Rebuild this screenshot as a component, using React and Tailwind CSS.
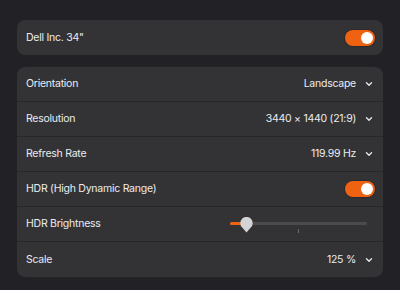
import React from 'react';

const Chevron = () => (
  <svg width="8" height="8" viewBox="0 0 8 8" className="ml-[9px] text-gray-200">
    <path d="M1.5 2.8 L4 5.2 L6.5 2.8" fill="none" stroke="currentColor" strokeWidth="1.4" strokeLinecap="round" strokeLinejoin="round" />
  </svg>
);

const Toggle = () => (
  <div className="w-[30px] h-[16px] rounded-full bg-[#ef6211] ring-1 ring-[#2a2a2d] flex items-center justify-end pr-[2px]">
    <div className="w-[12px] h-[12px] rounded-full bg-white" />
  </div>
);

const Row = ({ label, children }) => (
  <div className="h-[35px] flex items-center justify-between pl-[9px] pr-[8px]">
    <span>{label}</span>
    {children}
  </div>
);

const Select = ({ value }) => (
  <div className="flex items-center pr-[2px]">
    <span>{value}</span>
    <Chevron />
  </div>
);

// brightness slider with pin-shaped thumb
const Slider = () => (
  <div className="relative w-[137px] h-[20px] mr-[8px]">
    <div className="absolute left-0 right-0 top-[8px] h-[3px] rounded-full bg-[#4b4b4f]" />
    <div className="absolute left-0 w-[12px] top-[8px] h-[3px] rounded-l-full bg-[#ef6211]" />
    <div className="absolute left-[68px] top-[15px] w-[1px] h-[4px] bg-[#6b6b70]" />
    <svg className="absolute left-[10px] top-[3px]" width="13" height="17" viewBox="0 0 13 17">
      <path d="M6.5 15.5 L2.2 10.6 A6.2 6.2 0 1 1 10.8 10.6 Z" fill="#d4d4d6" />
    </svg>
  </div>
);

const App = () => {
  return (
    <div className="w-[400px] h-[290px] bg-[#222226] pt-[20px] px-[17px] text-[10.5px] tracking-[-0.25px] text-[#ececee]" style={{ fontFamily: 'Inter, "Noto Sans", sans-serif' }}>
      <div className="rounded-[8px] bg-[#333336]">
        <Row label={'Dell Inc. 34"'}>
          <Toggle />
        </Row>
      </div>
      <div className="mt-[12px] rounded-[8px] bg-[#333336] divide-y divide-[#27272a]">
        <Row label="Orientation"><Select value="Landscape" /></Row>
        <Row label="Resolution"><Select value="3440 × 1440 (21:9)" /></Row>
        <Row label="Refresh Rate"><Select value="119.99 Hz" /></Row>
        <Row label="HDR (High Dynamic Range)"><Toggle /></Row>
        <Row label="HDR Brightness"><Slider /></Row>
        <Row label="Scale"><Select value="125 %" /></Row>
      </div>
    </div>
  );
};

export default App;
